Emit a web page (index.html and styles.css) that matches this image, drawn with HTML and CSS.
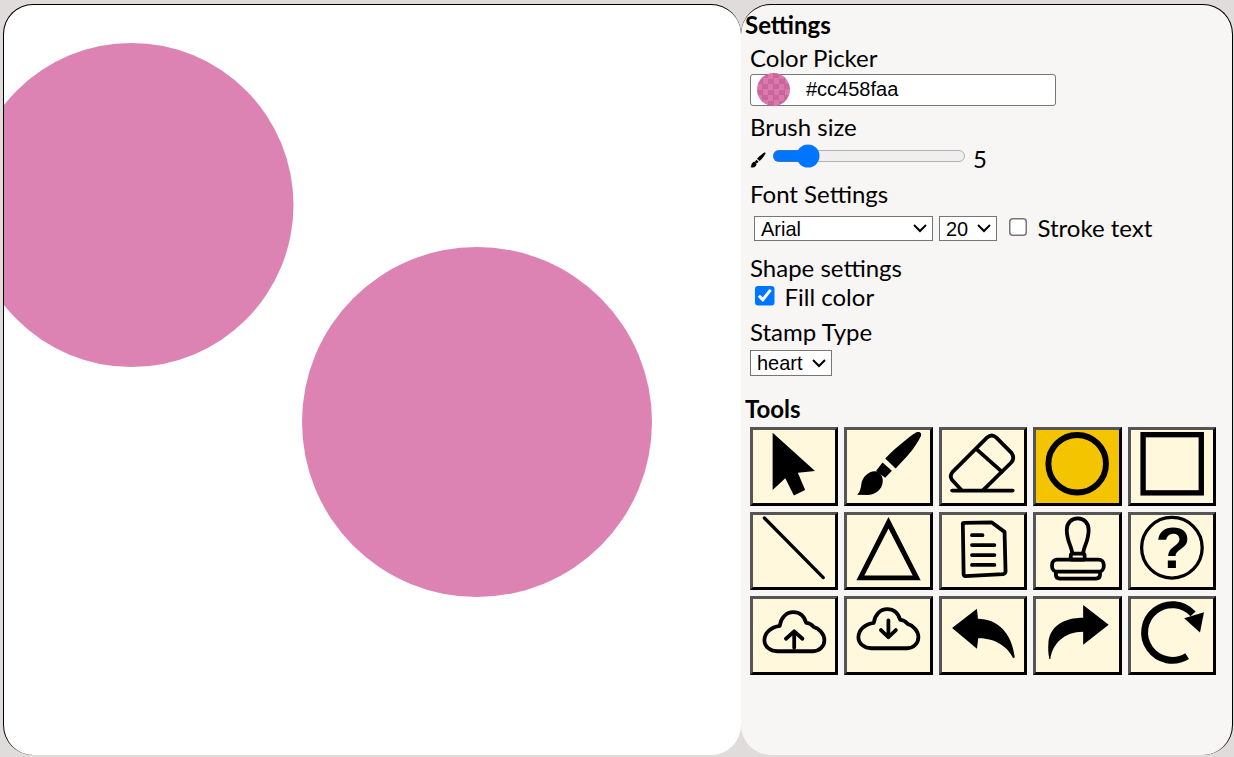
FILE: index.html
```html
<!DOCTYPE html>
<html lang="en">
<head>
  <meta charset="UTF-8">
  <meta name="viewport" content="width=device-width, initial-scale=1.0">
  <title>Paint</title>
  <link rel="stylesheet" href="styles.css">
</head>
<body>
  <div class="app">
    <div class="canvas-area">
      <svg class="drawing" viewBox="0 0 738 751">
        <circle cx="127.5" cy="200" r="162" fill="#cc458f" fill-opacity="0.667"/>
        <circle cx="473" cy="417" r="175" fill="#cc458f" fill-opacity="0.667"/>
      </svg>
    </div>
    <div class="panel">
      <h3>Settings</h3>
      <div class="group">
        <label class="title">Color Picker</label>
        <div class="color-field">
          <span class="swatch"></span>
          <input class="hex" type="text" value="#cc458faa">
        </div>
      </div>
      <div class="group brush-group">
        <label class="title">Brush size</label>
        <div class="row slider-row">
          <svg class="mini-brush" viewBox="8 0 68 68">
            <path d="M38 28.7C44 22 50 17 55 13C60 9 65 4.5 69 2.5C73 1 75 3 74 6C71 12 67 18 63 23C58 29 53 34 48.5 38.7Z"/>
            <path d="M28.7 41.3L35.3 32.7L44.7 41L38 48Z"/>
            <path d="M9.7 65.3C13 62 13.5 58 14 54C15 47 22 41 28 41.5C33 42 36 47 35.5 52C35 60 28 65 20 65.5Z"/>
          </svg>
          <input class="size" type="range" min="1" max="29" value="5">
          <span class="size-value">5</span>
        </div>
      </div>
      <div class="group font-group">
        <label class="title">Font Settings</label>
        <div class="row font-row">
          <select class="font-name"><option>Arial</option></select>
          <select class="font-size"><option>20</option></select>
          <input class="check stroke-check" type="checkbox">
          <span class="stroke-label">Stroke text</span>
        </div>
      </div>
      <div class="group shape-group">
        <label class="title">Shape settings</label>
        <div class="row fill-row">
          <input class="check" type="checkbox" checked>
          <span>Fill color</span>
        </div>
      </div>
      <div class="group stamp-group">
        <label class="title">Stamp Type</label>
        <select class="stamp"><option>heart</option></select>
      </div>
      <h3 class="tools-title">Tools</h3>
      <div class="tools">
        <button class="tool">
          <svg viewBox="0 0 82 73"><path d="M19.3 2.7L62 41.3L44.7 43L52 60.3L40.7 66L32 48.7L19.3 60.3Z"/></svg>
        </button>
        <button class="tool">
          <svg viewBox="0 0 82 73">
            <path d="M38 28.7C44 22 50 17 55 13C60 9 65 4.5 69 2.5C73 1 75 3 74 6C71 12 67 18 63 23C58 29 53 34 48.5 38.7Z"/>
            <path d="M28.7 41.3L35.3 32.7L44.7 41L38 48Z"/>
            <path d="M9.7 65.3C13 62 13.5 58 14 54C15 47 22 41 28 41.5C33 42 36 47 35.5 52C35 60 28 65 20 65.5Z"/>
          </svg>
        </button>
        <button class="tool">
          <svg class="line-icon" viewBox="0 0 82 73">
            <path d="M19 60.5L9.5 50Q7 46 10 42.5L45 7.5Q49.7 3.5 54 7.5L69.5 23Q73 28 69.5 32.5L41 60.5"/>
            <path d="M35.3 20.3L59.7 42"/>
            <path d="M9.7 61H70.7"/>
          </svg>
        </button>
        <button class="tool active">
          <svg class="line-icon" viewBox="0 0 82 73"><circle class="thick" cx="41" cy="34" r="29"/></svg>
        </button>
        <button class="tool">
          <svg class="line-icon" viewBox="0 0 82 73"><rect class="square" x="11.7" y="4.7" width="58.6" height="58.6"/></svg>
        </button>

        <button class="tool">
          <svg class="line-icon thin" viewBox="0 0 82 73"><path d="M11 3L70.3 63"/></svg>
        </button>
        <button class="tool">
          <svg viewBox="0 0 82 73"><path fill-rule="evenodd" d="M41.3 2L9 65.7H73.7ZM41.3 13.7L17 61H65.7Z"/></svg>
        </button>
        <button class="tool">
          <svg class="line-icon" viewBox="0 0 82 73">
            <path d="M20.5 9Q20 8 22 8L49.7 7.5L62.5 17L63.5 57Q63.5 59 61 59.5L23 61.5Q21.5 61.5 21.3 60Z"/>
            <path d="M29.7 20.3H40.3M29.7 30.3H52.3M29.7 40.3H52.3M29.7 50.3H52.3"/>
          </svg>
        </button>
        <button class="tool">
          <svg class="line-icon" viewBox="0 0 82 73">
            <path d="M36 39C36 32 30.5 27 30.5 15C30.5 8 35 3.5 41.5 3.5C48 3.5 52.5 8 52.5 15C52.5 27 47 32 47 39"/>
            <rect x="34.5" y="39" width="14" height="6" rx="2"/>
            <rect x="15.7" y="45" width="52" height="12" rx="5"/>
            <path d="M19.5 57V60Q19.5 64 23.5 64H60Q64 64 64 60V57"/>
          </svg>
        </button>
        <button class="tool">
          <svg class="line-icon thin" viewBox="0 0 82 73">
            <circle cx="40.7" cy="33" r="30.5"/>
            <text class="help-mark" x="42" y="53" text-anchor="middle">?</text>
          </svg>
        </button>

        <button class="tool">
          <svg class="line-icon" viewBox="0 0 82 73">
            <path d="M24 52.6H60C66.5 52.6 71.4 47.5 71.4 41.5C71.4 35 66 29.5 60.5 28C58 25 56 24 53 24C51 17 46 13.3 40 13.3C33 13.3 27.5 19 26.5 27C18 28 11 34 11 41.5C11 48 17 52.6 24 52.6Z"/>
            <path d="M41 49V32.5M32.7 40L41 32.5L49.3 40"/>
          </svg>
        </button>
        <button class="tool">
          <svg class="line-icon" viewBox="0 0 82 73">
            <path transform="translate(0 -3)" d="M24 52.6H60C66.5 52.6 71.4 47.5 71.4 41.5C71.4 35 66 29.5 60.5 28C58 25 56 24 53 24C51 17 46 13.3 40 13.3C33 13.3 27.5 19 26.5 27C18 28 11 34 11 41.5C11 48 17 52.6 24 52.6Z"/>
            <path d="M41.2 21.5V38.5M33.7 31.3L41.2 38.5L48.7 31.3"/>
          </svg>
        </button>
        <button class="tool">
          <svg viewBox="0 0 82 73"><path d="M9.7 29.3L34.7 9.7L35.7 20C55 20 70 34 72.8 59L71 59.5C66 48 52 39 36 39.5L34.7 50Z"/></svg>
        </button>
        <button class="tool">
          <svg viewBox="0 0 82 73"><path d="M72.7 26L47 6V19C28 19 13 27 12 45C11.5 50 12 56 13 60.5L14 60.5C16 45 28 33 47 33V46Z"/></svg>
        </button>
        <button class="tool">
          <svg viewBox="0 0 82 73">
            <path class="reload-arc" d="M56 57.5A28 28 0 1 1 62 15"/>
            <path d="M73 13.3L69 33.7L53 19.3Z"/>
          </svg>
        </button>
      </div>
    </div>
  </div>
</body>
</html>
```

FILE: styles.css
```css
html, body {
  height: 100%;
}
body {
  margin: 0;
  padding: 4px 1px 2px 3px;
  box-sizing: border-box;
  background-color: #e0dcdc;
  font-family: Lato, sans-serif;
  font-size: 24px;
  color: #000;
}
.app {
  display: flex;
  height: 100%;
}
.canvas-area {
  width: 738px;
  background-color: #fff;
  border: 1px solid #000;
  border-right: none;
  border-bottom: none;
  border-radius: 30px;
  overflow: hidden;
  box-sizing: border-box;
}
.drawing {
  display: block;
  width: 738px;
  height: 751px;
}
.panel {
  flex: 1;
  box-sizing: border-box;
  padding-left: 4px;
  background-color: #f8f6f4;
  border: 1px solid #000;
  border-left: none;
  border-bottom: none;
  border-radius: 30px;
}
h3 {
  margin: 0;
  padding-top: 6px;
  font-size: 24px;
  line-height: 28px;
  font-weight: bold;
}
.group {
  margin-left: 5px;
}
.title {
  display: block;
  font-size: 24px;
  line-height: 28px;
}
.row {
  display: flex;
  align-items: center;
}
.group:first-of-type {
  margin-top: 5px;
}
.color-field {
  display: flex;
  align-items: center;
  box-sizing: border-box;
  width: 306px;
  height: 32px;
  margin-top: 2px;
  background-color: #fff;
  border: 1px solid #767676;
  border-radius: 3px;
}
.swatch {
  width: 33px;
  height: 33px;
  flex: none;
  margin: -2px 0 0 6px;
  border-radius: 50%;
  background-color: #de77ad;
  background-image: conic-gradient(#c66899 25%, transparent 0 50%, #c66899 0 75%, transparent 0);
  background-size: 11px 11px;
}
.hex {
  flex: 1;
  min-width: 0;
  margin-top: -2px;
  padding: 0 0 0 16px;
  border: none;
  outline: none;
  background: none;
  font-family: "Liberation Sans", Arial, sans-serif;
  font-size: 20px;
}
.brush-group {
  margin-top: 7px;
}
.slider-row {
  margin-top: 1px;
}
.mini-brush {
  width: 16px;
  height: 16px;
  flex: none;
  margin-top: 5px;
}
/* native controls are scaled 1.5x, the reference was taken at that ratio */
.size {
  zoom: 1.5;
  width: 129.33px;
  margin: 0 0 2.67px 4px;
}
.size-value {
  margin-left: 7px;
  margin-top: 2px;
}
.font-group {
  margin-top: 7px;
}
.font-row {
  height: 29px;
  margin-top: 6px;
  padding-left: 4px;
}
select {
  zoom: 1.5;
  height: 17.33px;
  font-family: "Liberation Sans", Arial, sans-serif;
  font-size: 13.33px;
  background-color: #fff;
}
.font-name {
  width: 119.33px;
}
.font-size {
  width: 38.67px;
  margin-left: 4px;
}
.check {
  zoom: 1.5;
  width: 13px;
  height: 13px;
  margin: 0;
  flex: none;
}
.stroke-check {
  margin: 0 6px 1.33px 8px;
}
.stroke-label {
  margin-top: -2px;
}
.shape-group {
  margin-top: 11px;
}
.fill-row {
  padding-left: 5px;
}
.fill-row .check {
  margin: 0 6.67px 1px 0;
}
.stamp-group {
  margin-top: 7px;
}
.stamp {
  display: block;
  width: 54.67px;
  margin-top: 2.67px;
}
.tools-title {
  padding-top: 19px;
}
.tools {
  display: grid;
  grid-template-columns: repeat(5, 88.4px);
  grid-auto-rows: 78.5px;
  column-gap: 6.1px;
  row-gap: 6px;
  margin: 4.5px 0 0 4.9px;
}
.tool {
  display: block;
  padding: 0;
  box-sizing: border-box;
  background-color: #fff8dc;
  border: 3px solid;
  border-color: #555 #000 #000 #555;
}
.tool.active {
  background-color: #f5c400;
}
.tool svg {
  display: block;
  width: 100%;
  height: 100%;
  fill: #000;
}
.tool .line-icon {
  fill: none;
  stroke: #000;
  stroke-width: 3.8;
  stroke-linecap: round;
  stroke-linejoin: round;
}
.tool .line-icon.thin {
  stroke-width: 3.3;
}
.tool .line-icon .thick {
  stroke-width: 6;
}
.tool .line-icon .square {
  stroke-width: 5.4;
  stroke-linejoin: miter;
}
.help-mark {
  font-family: "Liberation Sans", Arial, sans-serif;
  font-size: 58px;
  font-weight: bold;
  fill: #000;
  stroke: none;
}
.reload-arc {
  fill: none;
  stroke: #000;
  stroke-width: 7;
}
```
